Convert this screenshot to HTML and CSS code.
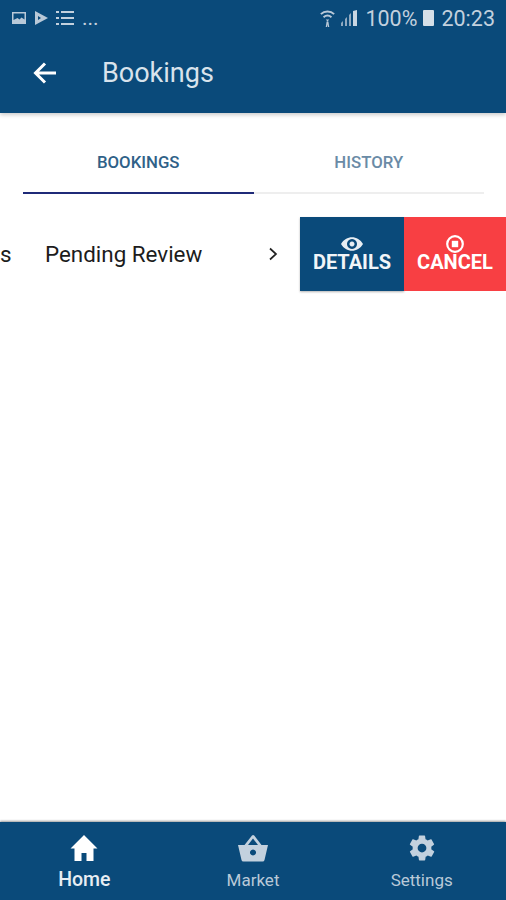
FILE: index.html
```html
<!DOCTYPE html>
<html lang="en">
<head>
  <meta charset="UTF-8" />
  <meta name="viewport" content="width=device-width, initial-scale=1.0"/>
  <title>Bookings</title>
  <link rel="stylesheet" href="styles.css">
</head>
<body>
  <div class="app">
    <header class="header">
      <div class="status-bar">
        <div class="status-left">
          <svg class="st-icon" width="16" height="14" viewBox="0 0 16 14"><path fill="#b9c9d8" d="M1 1h14v12H1z"/><path fill="#0a4a7a" d="M2.500 2.500h11v6l-3-2-2 2-2-1.500-4 2z"/></svg>
          <svg class="st-icon" width="15" height="14" viewBox="0 0 15 14"><path fill="#b9c9d8" d="M1 0l13 7-13 7z"/><path fill="#0a4a7a" d="M4 5l3 2-3 2z"/></svg>
          <svg class="st-icon" width="19" height="16" viewBox="0 0 19 16"><path fill="#c3d1de" d="M0 1h3v2H0zM5 1h13v2H5zM0 7h3v2H0zM5 7h13v2H5zM0 13h3v2H0zM5 13h13v2H5z"/></svg>
          <span class="dots">...</span>
        </div>
        <div class="status-right">
          <svg width="15" height="19" viewBox="0 0 17 19"><path fill="none" stroke="#b9c9d8" stroke-width="2.200" d="M1 4.500c4-4 11-4 15 0M4 8c3-2.500 6-2.500 9 0"/><path fill="#b9c9d8" d="M6.500 10.500h4l-2 2.500zM7.500 13h2l1 6h-1.500l-.5-3-.5 3H6.500z"/></svg>
          <svg class="signal" width="18" height="18" viewBox="0 0 18 18"><path fill="#8fa9c0" d="M1 14l2-2v5H1zM5 10l2-2v9H5zM9 6l2-2v13H9z"/><path fill="#c9d6e2" d="M13 2l4-1v16h-4z"/></svg>
          <span class="pct">100%</span>
          <span class="battery"></span>
          <span class="clock">20:23</span>
        </div>
      </div>
      <div class="toolbar">
        <svg class="back" width="26" height="24" viewBox="0 0 26 24"><path fill="none" stroke="#fff" stroke-width="3" d="M24 12H4M13 2.500L3.500 12l9.500 9.500"/></svg>
        <span class="title">Bookings</span>
      </div>
    </header>

    <nav class="tabs">
      <div class="tab active">BOOKINGS</div>
      <div class="tab">HISTORY</div>
    </nav>

    <main class="content">
      <div class="booking-row">
        <span class="cut-text">s</span>
        <span class="booking-status">Pending Review</span>
        <svg class="chevron" width="10" height="14" viewBox="0 0 10 14"><path fill="none" stroke="#222" stroke-width="1.700" d="M2 1.500L8 7l-6 5.500"/></svg>
        <div class="actions">
          <button class="action details">
            <svg width="22" height="14" viewBox="0 0 22 14"><path fill="#e8eef3" fill-rule="evenodd" d="M0 7c5-9 17-9 22 0-5 9-17 9-22 0zM11 2a5 5 0 1 0 .01 0zM11 4.500a2.500 2.500 0 1 1-.01 0z"/></svg>
            <span>DETAILS</span>
          </button>
          <button class="action cancel">
            <svg width="18" height="18" viewBox="0 0 18 18"><circle cx="9" cy="9" r="7.800" fill="none" stroke="#fff" stroke-width="2.200"/><path fill="#fff" d="M5.800 5.800h6.400v6.400H5.800z"/></svg>
            <span>CANCEL</span>
          </button>
        </div>
      </div>
    </main>

    <footer class="bottom-nav">
      <div class="nav-item current">
        <svg width="30" height="28" viewBox="0 0 30 28"><path fill="#fff" d="M15 1L1.500 14.500H5.500V27h7v-8h5v8h7V14.500h4z"/></svg>
        <span>Home</span>
      </div>
      <div class="nav-item">
        <svg width="32" height="28" viewBox="0 0 32 28"><path fill="#c3d1de" fill-rule="evenodd" d="M1 11h6.500L15 1.500a1.500 1.500 0 0 1 2.200 0L24.500 11H31l-3.500 15a2 2 0 0 1-2 1.500h-19a2 2 0 0 1-2-1.500zM11 11h10l-5-6.500zM16 15.500a3 3 0 1 0 .01 0z"/></svg>
        <span>Market</span>
      </div>
      <div class="nav-item">
        <svg width="30" height="30" viewBox="0 0 24 24"><path fill="#c3d1de" d="M19.400 13c.04-.32.1-.66.1-1s-.06-.68-.1-1l2.100-1.650c.2-.15.25-.42.12-.64l-2-3.460c-.12-.22-.4-.3-.6-.22l-2.500 1c-.5-.4-1.080-.72-1.700-.98l-.37-2.650A.5.500 0 0 0 14 2h-4a.5.500 0 0 0-.5.420l-.37 2.650c-.62.26-1.200.58-1.700.98l-2.500-1c-.22-.08-.48 0-.6.220l-2 3.460c-.13.220-.07.490.12.640L4.600 11c-.04.320-.1.660-.1 1s.06.680.1 1l-2.100 1.650c-.2.150-.25.420-.12.640l2 3.460c.12.220.4.300.6.220l2.500-1c.5.400 1.080.720 1.700.980l.37 2.650c.03.240.25.420.5.420h4c.25 0 .47-.18.500-.42l.37-2.650c.62-.26 1.200-.58 1.700-.98l2.500 1c.22.080.48 0 .6-.22l2-3.460c.13-.22.070-.49-.12-.64zM12 15.500a3.500 3.500 0 1 1 0-7 3.500 3.500 0 0 1 0 7z"/></svg>
        <span>Settings</span>
      </div>
    </footer>
  </div>
</body>
</html>
```

FILE: styles.css
```css
* {
  box-sizing: border-box;
}
html, body {
  margin: 0;
  height: 100%;
}
body {
  font-family: Roboto, 'Liberation Sans', sans-serif;
  background: #fff;
}
.app {
  height: 900px;
  display: flex;
  flex-direction: column;
  overflow: hidden;
}

/* header */
.header {
  height: 113px;
  background: #0a4a7a;
  box-shadow: 0 2px 4px rgba(0, 0, 0, 0.2);
  flex-shrink: 0;
}
.status-bar {
  height: 36px;
  display: flex;
  align-items: center;
  justify-content: space-between;
  padding: 0 11px;
}
.status-left {
  display: flex;
  align-items: center;
  gap: 7px;
}
.dots {
  color: #c3d1de;
  font-size: 21px;
  line-height: 21px;
}
.status-right {
  display: flex;
  align-items: center;
  color: #c3d1de;
  font-size: 21.500px;
}
.signal {
  margin-left: 5px;
}
.pct {
  margin-left: 7px;
}
.battery {
  width: 11px;
  height: 16px;
  margin: 0 7px 0 6px;
  background: #d5dfe8;
  border-radius: 1px;
}
.toolbar {
  height: 77px;
  display: flex;
  align-items: center;
  padding: 0 0 3px 32px;
}
.back {
  margin-right: 44px;
}
.title {
  color: #d9e3ec;
  font-size: 27px;
}

/* tabs */
.tabs {
  display: flex;
  margin: 17px 22px 0 23px;
  flex-shrink: 0;
}
.tab {
  flex: 1;
  height: 64px;
  padding-top: 22px;
  text-align: center;
  font-size: 16.800px;
  font-weight: 500;
  color: #6a8ba6;
  border-bottom: 2px solid #eeeeee;
}
.tab.active {
  color: #2f6188;
  border-bottom-color: #1f2a78;
}

/* booking row */
.content {
  flex: 1;
  padding-top: 23px;
}
.booking-row {
  height: 74px;
  display: flex;
  align-items: center;
  font-size: 22.400px;
  color: #1c1c1c;
}
.cut-text {
  width: 45px;
}
.booking-status {
  width: 223px;
}
.chevron {
  flex-shrink: 0;
}
.actions {
  display: flex;
  height: 100%;
  margin-left: 22px;
}
.action {
  height: 100%;
  border: none;
  padding: 20px 0 0;
  display: flex;
  flex-direction: column;
  align-items: center;
  color: #f2f5f8;
  font-family: inherit;
  font-size: 20px;
  font-weight: 700;
  line-height: 22px;
}
.details {
  width: 104px;
  background: #0a4a7a;
  box-shadow: 0 1px 2px rgba(0, 0, 0, 0.3);
}
.cancel {
  width: 102px;
  background: #f83f43;
  color: #fff;
}
.cancel svg {
  margin: -2px 0;
}

/* bottom nav */
.bottom-nav {
  height: 78px;
  display: flex;
  background: #0a4a7a;
  box-shadow: 0 -1px 2px rgba(0, 0, 0, 0.4);
  flex-shrink: 0;
}
.nav-item {
  flex: 1;
  display: flex;
  flex-direction: column;
  align-items: center;
  padding-top: 11px;
  gap: 7px;
  color: #b9c9d8;
  font-size: 17px;
  line-height: 20px;
}
.nav-item svg {
  height: 30px;
}
.nav-item.current {
  color: #e8eef3;
  font-size: 19.500px;
  font-weight: 500;
}
```
